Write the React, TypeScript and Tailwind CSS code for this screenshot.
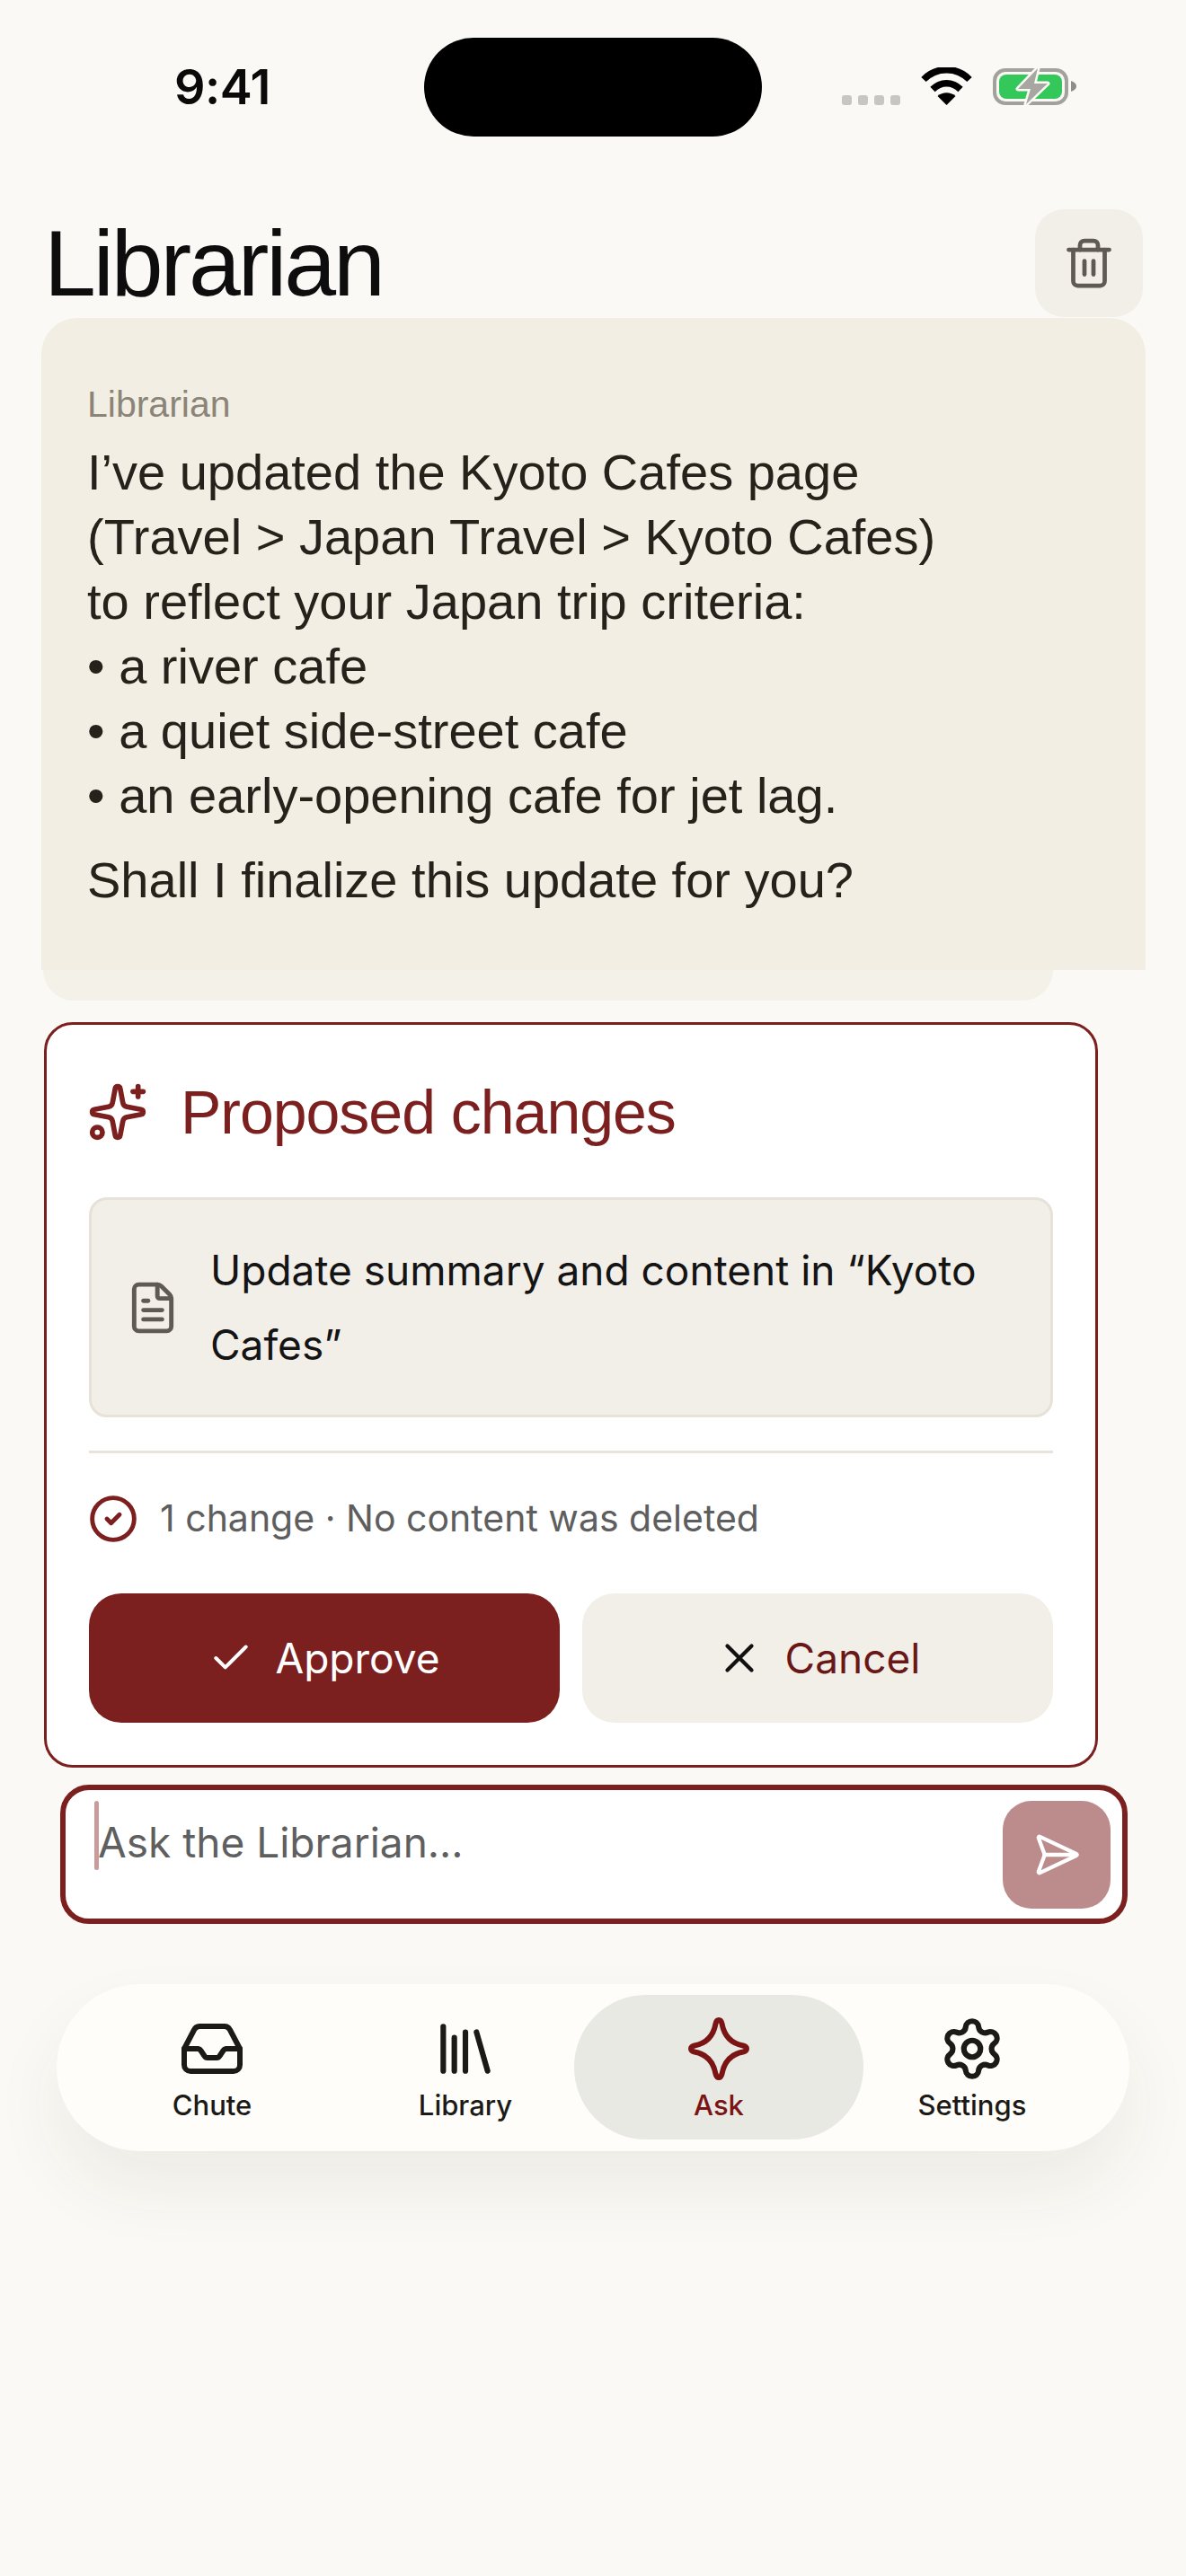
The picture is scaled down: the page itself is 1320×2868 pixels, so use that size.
import { Check, CircleCheck, FileText, Library, SendHorizontal, Settings, Sparkles, Trash2, X } from "lucide-react";

function Wifi() {
  return (
    <svg width="57" height="42" viewBox="0 0 57 42" fill="none">
      <path d="M3 13.5C17 -1 40 -1 54 13.5" stroke="#000" strokeWidth="7.5" />
      <path d="M13 24.5C22 15.5 35 15.5 44 24.5" stroke="#000" strokeWidth="7.5" />
      <path d="M18.5 32C24 27 33 27 38.5 32L28.5 42Z" fill="#000" />
    </svg>
  );
}

function Battery() {
  return (
    <svg width="93" height="42" viewBox="0 0 93 42" fill="none">
      <rect x="2" y="3" width="80" height="37" rx="12" stroke="#a3a19b" strokeWidth="4" />
      <path d="M87 15C90 16 93 18 93 21C93 24 90 26 87 27Z" fill="#8f8d87" />
      <rect x="7" y="8" width="70" height="27" rx="8" fill="#34c759" />
      <path d="M50 1L28 24H42L37 41L61 18H46Z" fill="#a8a6a0" stroke="#fbf9f5" strokeWidth="5" strokeLinejoin="round" paintOrder="stroke" />
    </svg>
  );
}

function Inbox() {
  return (
    <svg width="68" height="56" viewBox="0 0 68 56" fill="none" stroke="#1c1a16" strokeWidth="6" strokeLinecap="round" strokeLinejoin="round">
      <path d="M3 28V46a7 7 0 0 0 7 7H58a7 7 0 0 0 7-7V28L54 7a7 7 0 0 0-6-4H20a7 7 0 0 0-6 4Z" />
      <path d="M3 28H18a4 4 0 0 1 3.5 2l4 6a4 4 0 0 0 3.5 2H39a4 4 0 0 0 3.5-2l4-6a4 4 0 0 1 3.5-2H65" />
    </svg>
  );
}

function Star() {
  return (
    <svg width="68" height="70" viewBox="0 0 68 70" fill="none" stroke="#7b1414" strokeWidth="6" strokeLinejoin="round">
      <path d="M34 3C36 3 37 5 37.5 7C40 21 48 29 61 31.5C63 32 65 33 65 35C65 37 63 38 61 38.5C48 41 40 49 37.5 63C37 65 36 67 34 67C32 67 31 65 30.5 63C28 49 20 41 7 38.5C5 38 3 37 3 35C3 33 5 32 7 31.5C20 29 28 21 30.5 7C31 5 32 3 34 3Z" />
    </svg>
  );
}

function Tab({ icon, label, active }: { icon: React.ReactNode; label: string; active?: boolean }) {
  return (
    <div className="relative flex h-[161px] flex-col items-center pt-[23px]">
      {active && <div className="absolute inset-y-0 -left-[20px] -right-[20px] rounded-[80px] bg-[#e9e9e3]" />}
      <div className="relative flex h-[74px] items-center justify-center">{icon}</div>
      <div className={`relative mt-[6px] text-[31px] leading-[40px] font-medium ${active ? "text-[#7b1414]" : "text-[#1c1a16]"}`}>{label}</div>
    </div>
  );
}

export default function App() {
  return (
    <div className="flex h-[2868px] w-[1320px] flex-col overflow-hidden bg-[#fbf9f5] font-['Inter',sans-serif]">
      <div className="flex h-[233px] shrink-0 items-start">
        <div className="mt-[72px] w-[472px] pl-[194px] text-[54px] leading-[50px] font-semibold tracking-[-0.01em] text-[#0a0a0a]">9:41</div>
        <div className="mt-[42px] h-[110px] w-[376px] rounded-full bg-black" />
        <div className="mt-[75px] ml-[89px] flex items-end">
          <div className="flex gap-[7px]">
            <span className="h-[11px] w-[11px] rounded-[3px] bg-[#c8c6c0]" />
            <span className="h-[11px] w-[11px] rounded-[3px] bg-[#c8c6c0]" />
            <span className="h-[11px] w-[11px] rounded-[3px] bg-[#c8c6c0]" />
            <span className="h-[11px] w-[11px] rounded-[3px] bg-[#c8c6c0]" />
          </div>
          <div className="ml-[23px]"><Wifi /></div>
          <div className="ml-[23px]"><Battery /></div>
        </div>
      </div>

      <div className="flex h-[120px] shrink-0 items-center justify-between pr-[48px] pl-[49px]">
        <h1 className="font-['Liberation_Sans',sans-serif] text-[104px] leading-[120px] font-normal tracking-[-0.03em] text-[#0d0d0d]">Librarian</h1>
        <div className="flex h-[120px] w-[120px] items-center justify-center rounded-[32px] bg-[#f2efe8]">
          <Trash2 size={60} strokeWidth={1.9} color="#5f5b53" />
        </div>
      </div>

      <div className="mt-px ml-[46px] h-[726px] w-[1229px] shrink-0 rounded-t-[40px] bg-[#f2eee4] px-[51px] pt-[70px] font-['Liberation_Sans',sans-serif]">
        <div className="text-[41px] leading-[52px] text-[#8b8579]">Librarian</div>
        <div className="mt-[14px] text-[56px] leading-[72px] text-[#26211a]">
          <div>I’ve updated the Kyoto Cafes page</div>
          <div>(Travel &gt; Japan Travel &gt; Kyoto Cafes)</div>
          <div>to reflect your Japan trip criteria:</div>
          <div>• a river cafe</div>
          <div>• a quiet side-street cafe</div>
          <div>• an early-opening cafe for jet lag.</div>
          <div className="mt-[22px]">Shall I finalize this update for you?</div>
        </div>
      </div>
      <div className="ml-[48px] h-[34px] w-[1124px] shrink-0 rounded-b-[40px] bg-[#f4f1e9]" />

      <div className="mt-[24px] ml-[49px] h-[830px] w-[1173px] shrink-0 rounded-[32px] border-[3px] border-[#7b1f1f] bg-white px-[47px] pt-[50px]">
        <div className="flex h-[94px] items-center">
          <Sparkles size={68} strokeWidth={2} color="#7b1f1f" className="-ml-[2px]" />
          <div className="ml-[36px] font-['Liberation_Sans',sans-serif] text-[68px] leading-[94px] tracking-[-0.015em] text-[#7b1f1f]">Proposed changes</div>
        </div>
        <div className="mt-[48px] flex h-[245px] items-center rounded-[20px] border-[3px] border-[#e6e2d7] bg-[#f2efe8] pr-[40px] pl-[37px]">
          <FileText size={62} strokeWidth={1.9} color="#5f5b53" className="shrink-0" />
          <div className="ml-[33px] text-[46px] leading-[83px] text-[#141414]">Update summary and content in “Kyoto Cafes”</div>
        </div>
        <div className="mt-[37px] h-[3px] bg-[#e8e4d9]" />
        <div className="mt-[42px] flex h-[61px] items-center">
          <CircleCheck size={56} strokeWidth={2.1} color="#7b1f1f" className="-ml-[1px] shrink-0" />
          <div className="ml-[24px] text-[41px] leading-[61px] text-[#5e5e5e]">1 change · No content was deleted</div>
        </div>
        <div className="mt-[53px] grid h-[144px] grid-cols-2 gap-[25px]">
          <div className="flex items-center justify-center gap-[24px] rounded-[36px] bg-[#7b1f1f]">
            <Check size={50} strokeWidth={1.9} color="#ffffff" />
            <span className="text-[46px] leading-[60px] text-white">Approve</span>
          </div>
          <div className="flex items-center justify-center gap-[24px] rounded-[36px] bg-[#f2efe8]">
            <X size={54} strokeWidth={1.9} color="#111111" />
            <span className="text-[46px] leading-[60px] text-[#6a1717]">Cancel</span>
          </div>
        </div>
      </div>

      <div className="mt-[19px] ml-[67px] flex h-[155px] w-[1188px] shrink-0 items-start justify-between rounded-[32px] border-[6px] border-[#7b1f1f] bg-white pt-[12px] pr-[13px] pl-[32px]">
        <div className="flex items-start">
          <div className="h-[77px] w-[5px] rounded-full bg-[#c99b9b]" />
          <div className="-ml-[1px] text-[46px] leading-[92px] text-[#5f5f5f]">Ask the Librarian...</div>
        </div>
        <div className="flex h-[120px] w-[120px] items-center justify-center rounded-[32px] bg-[#bc8c8c]">
          <SendHorizontal size={54} strokeWidth={1.9} color="#ffffff" />
        </div>
      </div>

      <div className="mt-[67px] ml-[63px] h-[186px] w-[1194px] shrink-0 rounded-[93px] bg-[#fefdf9] pt-[12px] pl-[32px] shadow-[0_40px_80px_rgba(60,50,30,0.07)]">
        <div className="grid grid-cols-[282px_282px_282px_282px]">
          <Tab icon={<Inbox />} label="Chute" />
          <Tab icon={<Library size={74} strokeWidth={2} color="#1c1a16" />} label="Library" />
          <Tab icon={<Star />} label="Ask" active />
          <Tab icon={<Settings size={74} strokeWidth={2} color="#1c1a16" />} label="Settings" />
        </div>
      </div>
    </div>
  );
}
